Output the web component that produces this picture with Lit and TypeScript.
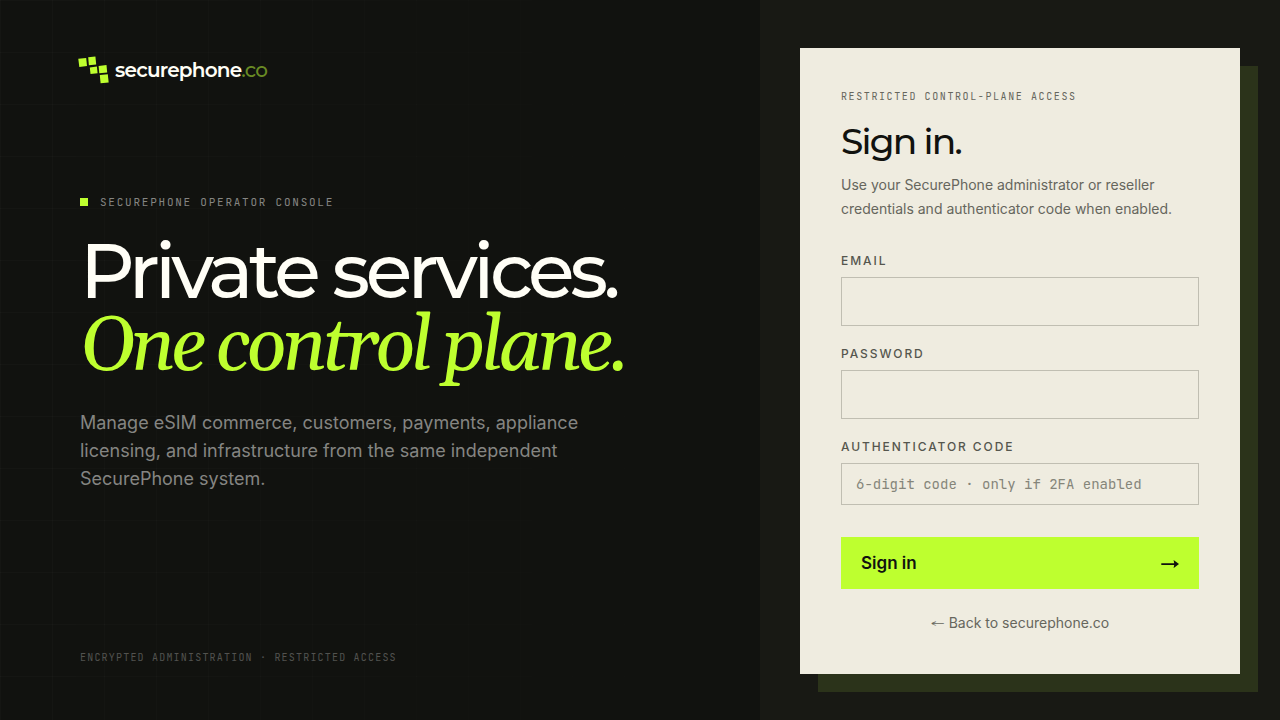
import { LitElement, html, css } from "lit";
import { customElement } from "lit/decorators.js";

@customElement("brand-logo")
class BrandLogo extends LitElement {
  static styles = css`
    :host {
      display: block;
    }
    .logo {
      display: flex;
      align-items: center;
      gap: 6px;
      margin-left: -2px;
      height: 28px;
      color: #fffef6;
      font: 600 20px/28px "Montserrat", "Inter", sans-serif;
      letter-spacing: -0.04em;
      text-decoration: none;
    }
    .mark {
      width: 31px;
      height: 28px;
      fill: #beff2f;
    }
    .tld {
      color: #698a24;
      font-weight: 500;
    }
  `;

  render() {
    return html`
      <a class="logo" href="#">
        <svg class="mark" viewBox="0 0 31 28" aria-hidden="true">
          <path d="M0.3 2.8 8.2 1.9 9 10 1.3 10.9Z" />
          <path d="M10.2 1.2 17.4 0.4 18.2 8.5 10.9 9.3Z" />
          <path d="M11.8 11.4 18.9 10.6 19.6 17.3 12.5 18.1Z" />
          <path d="M20.6 10 28.5 9.1 29.2 16.5 21.3 17.3Z" />
          <path d="M21.8 19.1 29.8 18.2 30.7 26.5 22.6 27.3Z" />
        </svg>
        <span>securephone<span class="tld">.co</span></span>
      </a>
    `;
  }
}

@customElement("app-root")
class AppRoot extends LitElement {
  static styles = css`
    :host {
      display: block;
      color: #11120f;
      font-family: "Inter", sans-serif;
    }
    * {
      box-sizing: border-box;
    }
    .page {
      display: grid;
      grid-template-columns: minmax(0, 1fr) 520px;
      min-height: 100vh;
      background: #181914;
    }
    .intro {
      position: relative;
      display: flex;
      flex-direction: column;
      justify-content: space-between;
      padding: 56px 80px;
      background: #11120f;
    }
    .intro::before {
      content: "";
      position: absolute;
      inset: 0;
      background-image: linear-gradient(rgba(255, 255, 255, 0.02) 1px, transparent 1px),
        linear-gradient(90deg, rgba(255, 255, 255, 0.02) 1px, transparent 1px);
      background-size: 52px 52px;
      mask-image: linear-gradient(90deg, #000, transparent);
      pointer-events: none;
    }
    .intro > * {
      position: relative;
    }
    .pitch {
      margin-bottom: 48px;
    }
    .mono {
      margin: 0;
      font-family: "JetBrains Mono", "DejaVu Sans Mono", monospace;
      text-transform: uppercase;
    }
    .kicker {
      display: flex;
      align-items: center;
      gap: 12px;
      color: #858582;
      font-size: 11px;
      line-height: 16px;
      letter-spacing: 0.16em;
    }
    .kicker::before {
      content: "";
      width: 8px;
      height: 8px;
      background: #beff2f;
    }
    .headline {
      margin: 25px 0;
      color: #fffef6;
      font: 500 76px/72px "Montserrat", "Inter", sans-serif;
      letter-spacing: -0.06em;
      white-space: nowrap;
    }
    .headline em {
      color: #beff2f;
      font-family: "Georgia", "Gelasio", "Liberation Serif", serif;
      font-weight: 400;
    }
    .lead {
      max-width: 540px;
      margin: 0;
      color: #858582;
      font-size: 18px;
      line-height: 28px;
    }
    .note {
      color: #52524f;
      font-size: 10px;
      line-height: 16px;
      letter-spacing: 0.12em;
    }
    .access {
      display: flex;
      align-items: center;
      padding: 48px 40px;
    }
    .card {
      width: 100%;
      padding: 41px;
      background: #efece0;
      box-shadow: 18px 18px 0 #2b331a;
    }
    .scope {
      color: #66665d;
      font-size: 10px;
      line-height: 16px;
      letter-spacing: 0.16em;
    }
    .title {
      margin: 16px 0 12px;
      font: 500 36px/40px "Montserrat", "Inter", sans-serif;
      letter-spacing: -0.05em;
    }
    .hint {
      margin: 0 0 32px;
      color: #66665d;
      font-size: 14px;
      line-height: 24px;
    }
    .label {
      display: block;
      margin-bottom: 8px;
      color: #55564e;
      font-size: 12px;
      font-weight: 500;
      line-height: 16px;
      letter-spacing: 0.16em;
      text-transform: uppercase;
    }
    .field {
      display: block;
      width: 100%;
      height: 49px;
      margin: 0 0 20px;
      padding: 0 14px;
      border: 1px solid #c0beb2;
      border-radius: 0;
      background: transparent;
      color: #11120f;
      font: 16px/20px "Inter", sans-serif;
      outline-color: #11120f;
    }
    .code {
      height: 42px;
      margin-bottom: 32px;
      font: 14px/20px "JetBrains Mono", "DejaVu Sans Mono", monospace;
    }
    .code::placeholder {
      color: #85857a;
      opacity: 1;
    }
    .submit {
      display: flex;
      align-items: center;
      justify-content: space-between;
      width: 100%;
      height: 52px;
      padding: 0 20px;
      border: 0;
      background: #beff2f;
      color: #11120f;
      font: 600 17px/24px "Inter", sans-serif;
      cursor: pointer;
    }
    .go {
      width: 18px;
      height: 10px;
      fill: currentColor;
    }
    .arrow {
      font-family: "Charis SIL", "Liberation Sans", sans-serif;
    }
    .back {
      display: block;
      margin-top: 24px;
      color: #66665d;
      font-size: 14px;
      line-height: 20px;
      text-align: center;
      text-decoration: none;
    }
  `;

  render() {
    return html`
      <main class="page">
        <section class="intro">
          <brand-logo></brand-logo>
          <div class="pitch">
            <p class="mono kicker">SecurePhone operator console</p>
            <h1 class="headline">Private services.<br /><em>One control plane.</em></h1>
            <p class="lead">
              Manage eSIM commerce, customers, payments, appliance licensing, and infrastructure from
              the same independent SecurePhone system.
            </p>
          </div>
          <p class="mono note">Encrypted administration · Restricted access</p>
        </section>
        <section class="access">
          <form class="card" @submit=${(e: Event) => e.preventDefault()}>
            <p class="mono scope">Restricted control-plane access</p>
            <h2 class="title">Sign in.</h2>
            <p class="hint">
              Use your SecurePhone administrator or reseller credentials and authenticator code when
              enabled.
            </p>
            <label class="label" for="email">Email</label>
            <input class="field" id="email" type="email" autocomplete="username" />
            <label class="label" for="password">Password</label>
            <input class="field" id="password" type="password" autocomplete="current-password" />
            <label class="label" for="code">Authenticator code</label>
            <input
              class="field code"
              id="code"
              inputmode="numeric"
              placeholder="6-digit code · only if 2FA enabled"
            />
            <button class="submit" type="submit">
              <span>Sign in</span>
              <svg class="go" viewBox="0 0 18 10" aria-hidden="true">
                <path d="M0.3 5.2H13.2L12.6 2 18 6.1 12.6 10.1 13.2 7H0.3Z" />
              </svg>
            </button>
            <a class="back" href="#"><span class="arrow">←</span> Back to securephone.co</a>
          </form>
        </section>
      </main>
    `;
  }
}
